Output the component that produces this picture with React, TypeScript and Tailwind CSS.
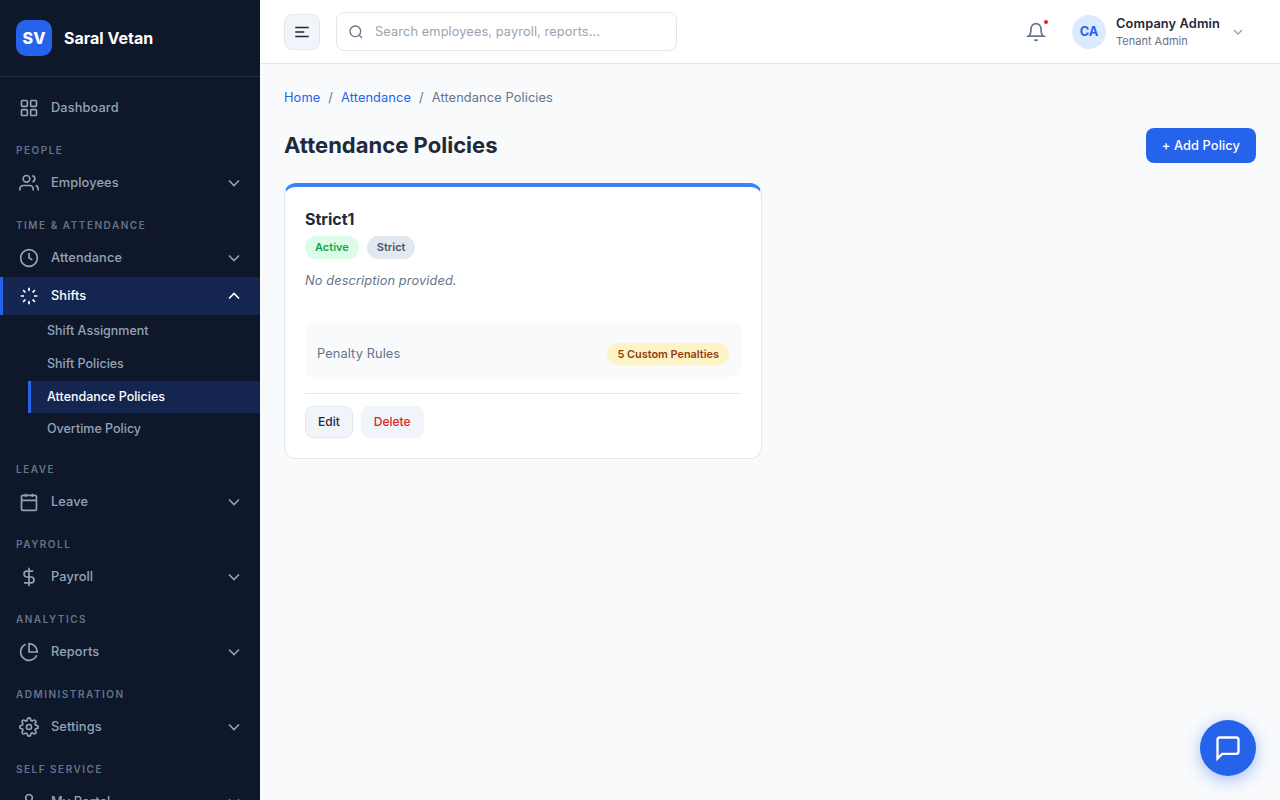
import type { ReactNode } from "react";

type IconProps = { size?: number; className?: string; children: ReactNode };

function Icon({ size = 20, className = "", children }: IconProps) {
  return (
    <svg
      width={size}
      height={size}
      viewBox="0 0 24 24"
      fill="none"
      stroke="currentColor"
      strokeWidth={2}
      className={`shrink-0 ${className}`}
    >
      {children}
    </svg>
  );
}

const icons: Record<string, ReactNode> = {
  grid: (
    <>
      <rect x="3" y="3" width="7" height="7" rx="1" />
      <rect x="14" y="3" width="7" height="7" rx="1" />
      <rect x="3" y="14" width="7" height="7" rx="1" />
      <rect x="14" y="14" width="7" height="7" rx="1" />
    </>
  ),
  users: (
    <>
      <path d="M17 21v-2a4 4 0 0 0-4-4H5a4 4 0 0 0-4 4v2" />
      <circle cx="9" cy="7" r="4" />
      <path d="M23 21v-2a4 4 0 0 0-3-3.87M16 3.13a4 4 0 0 1 0 7.75" />
    </>
  ),
  clock: (
    <>
      <circle cx="12" cy="12" r="10" />
      <path d="M12 6v6l4 2" />
    </>
  ),
  shifts: <path d="M12 2v4M12 18v4M4.93 4.93l2.83 2.83M16.24 16.24l2.83 2.83M2 12h4M18 12h4M4.93 19.07l2.83-2.83M16.24 7.76l2.83-2.83" />,
  calendar: (
    <>
      <rect x="3" y="4" width="18" height="18" rx="2" />
      <path d="M16 2v4M8 2v4M3 10h18" />
    </>
  ),
  dollar: <path d="M12 1v22M17 5H9.5a3.5 3.5 0 0 0 0 7h5a3.5 3.5 0 0 1 0 7H6" />,
  pie: <path d="M21.21 15.89A10 10 0 1 1 8 2.83M22 12A10 10 0 0 0 12 2v10z" />,
  settings: (
    <>
      <circle cx="12" cy="12" r="3" />
      <path d="M19.4 15a1.65 1.65 0 0 0 .33 1.82l.06.06a2 2 0 0 1 0 2.83 2 2 0 0 1-2.83 0l-.06-.06a1.65 1.65 0 0 0-1.82-.33 1.65 1.65 0 0 0-1 1.51V21a2 2 0 0 1-2 2 2 2 0 0 1-2-2v-.09A1.65 1.65 0 0 0 9 19.4a1.65 1.65 0 0 0-1.82.33l-.06.06a2 2 0 0 1-2.83 0 2 2 0 0 1 0-2.83l.06-.06a1.65 1.65 0 0 0 .33-1.82 1.65 1.65 0 0 0-1.51-1H3a2 2 0 0 1-2-2 2 2 0 0 1 2-2h.09A1.65 1.65 0 0 0 4.6 9a1.65 1.65 0 0 0-.33-1.82l-.06-.06a2 2 0 0 1 0-2.83 2 2 0 0 1 2.83 0l.06.06a1.65 1.65 0 0 0 1.82.33H9a1.65 1.65 0 0 0 1-1.51V3a2 2 0 0 1 2-2 2 2 0 0 1 2 2v.09a1.65 1.65 0 0 0 1 1.51 1.65 1.65 0 0 0 1.82-.33l.06-.06a2 2 0 0 1 2.83 0 2 2 0 0 1 0 2.83l-.06.06a1.65 1.65 0 0 0-.33 1.82V9a1.65 1.65 0 0 0 1.51 1H21a2 2 0 0 1 2 2 2 2 0 0 1-2 2h-.09a1.65 1.65 0 0 0-1.51 1z" />
    </>
  ),
  user: (
    <>
      <path d="M20 21v-2a4 4 0 0 0-4-4H8a4 4 0 0 0-4 4v2" />
      <circle cx="12" cy="7" r="4" />
    </>
  ),
};

type NavEntry = { label: string; icon: string; open?: boolean; children?: string[] };

const sections: { title: string; items: NavEntry[] }[] = [
  { title: "People", items: [{ label: "Employees", icon: "users" }] },
  {
    title: "Time & Attendance",
    items: [
      { label: "Attendance", icon: "clock" },
      {
        label: "Shifts",
        icon: "shifts",
        open: true,
        children: ["Shift Assignment", "Shift Policies", "Attendance Policies", "Overtime Policy"],
      },
    ],
  },
  { title: "Leave", items: [{ label: "Leave", icon: "calendar" }] },
  { title: "Payroll", items: [{ label: "Payroll", icon: "dollar" }] },
  { title: "Analytics", items: [{ label: "Reports", icon: "pie" }] },
  { title: "Administration", items: [{ label: "Settings", icon: "settings" }] },
  { title: "Self Service", items: [{ label: "My Portal", icon: "user" }] },
];

const currentPage = "Attendance Policies";

function NavItem({ item, expandable = true }: { item: NavEntry; expandable?: boolean }) {
  return (
    <a
      className={`flex h-[38px] items-center gap-3 border-l-[3px] pr-4 pl-4 text-[12.8px] leading-[19.5px] font-medium tracking-[0.1px] ${
        item.open ? "border-[#2563eb] bg-[#14264f] text-white" : "border-transparent text-[#94a3b8]"
      }`}
    >
      <Icon>{icons[item.icon]}</Icon>
      <span className="flex-1">{item.label}</span>
      {expandable && (
        <Icon>
          <path d={item.open ? "M18 15l-6-6-6 6" : "M6 9l6 6 6-6"} />
        </Icon>
      )}
    </a>
  );
}

function Sidebar() {
  return (
    <aside className="flex h-full w-[260px] shrink-0 flex-col overflow-hidden bg-[#0f172a]">
      <div className="flex shrink-0 items-center gap-3 border-b border-white/10 px-4 py-5">
        <div className="flex h-9 w-9 items-center justify-center rounded-[10px] bg-[#2563eb] text-base font-extrabold text-white">
          SV
        </div>
        <span className="text-base font-bold text-white">Saral Vetan</span>
      </div>
      <nav className="min-h-0 flex-1 overflow-hidden py-3">
        <NavItem item={{ label: "Dashboard", icon: "grid" }} expandable={false} />
        {sections.map((s) => (
          <div key={s.title}>
            <div className="px-4 pt-4 pb-1.5 text-[10px] leading-[15px] font-semibold tracking-[1.5px] text-[#64748b] uppercase">
              {s.title}
            </div>
            {s.items.map((item) => (
              <div key={item.label}>
                <NavItem item={item} />
                {item.children && (
                  <div className="ml-7">
                    {item.children.map((c) => (
                      <a
                        key={c}
                        className={`block border-l-[3px] py-[7px] pl-4 text-[12.5px] leading-[18.75px] font-medium ${
                          c === currentPage ? "border-[#2563eb] bg-[#14264f] text-white" : "border-transparent text-[#94a3b8]"
                        }`}
                      >
                        {c}
                      </a>
                    ))}
                  </div>
                )}
              </div>
            ))}
          </div>
        ))}
      </nav>
    </aside>
  );
}

function Topbar() {
  return (
    <header className="flex h-16 shrink-0 items-center border-b border-[#e2e8f0] bg-white px-6">
      <button className="flex h-9 w-9 items-center justify-center rounded-lg border border-[#e2e8f0] bg-[#f1f5f9] text-[#1e293b]">
        <Icon size={18}>
          <path d="M3 6h18M3 12h12M3 18h18" />
        </Icon>
      </button>
      <div className="ml-4 flex h-[39px] w-[341px] items-center gap-[11px] rounded-lg border border-[#e2e8f0] bg-white px-[11px]">
        <Icon size={16} className="text-[#64748b]">
          <circle cx="11" cy="11" r="8" />
          <path d="M21 21l-4.35-4.35" />
        </Icon>
        <span className="text-[12.8px] leading-[19.5px] tracking-[0.1px] text-[#9ca3af]">
          Search employees, payroll, reports...
        </span>
      </div>
      <div className="ml-auto flex items-center">
        <button className="relative mr-[26px] text-[#64748b]">
          <Icon>
            <path d="M18 8A6 6 0 0 0 6 8c0 7-3 9-3 9h18s-3-2-3-9M13.73 21a2 2 0 0 1-3.46 0" />
          </Icon>
          <span className="absolute -top-0.5 -right-0.5 h-1 w-1 rounded-full bg-[#dc2626]" />
        </button>
        <div className="flex h-[34px] w-[34px] items-center justify-center rounded-full bg-[#dbeafe] text-[12.8px] font-bold text-[#2563eb]">
          CA
        </div>
        <div className="ml-2.5">
          <div className="text-[12.8px] leading-[19.5px] font-semibold tracking-[0.12px] text-[#1e293b]">Company Admin</div>
          <div className="text-[11px] leading-[16.5px] text-[#64748b]">Tenant Admin</div>
        </div>
        <Icon size={16} className="mr-2.5 ml-2.5 text-[#94a3b8]">
          <path d="M6 9l6 6 6-6" />
        </Icon>
      </div>
    </header>
  );
}

function PolicyCard() {
  return (
    <article className="rounded-xl border border-t-4 border-[#e2e8f0] border-t-[#3b82f6] bg-white p-5">
      <h3 className="text-base leading-6 font-bold text-[#1e293b]">Strict1</h3>
      <div className="mt-[5px] flex gap-2 text-[11px] leading-[17px] font-semibold">
        <span className="rounded-full bg-[#dcfce7] px-2.5 py-[3px] text-[#16a34a]">Active</span>
        <span className="rounded-full bg-[#e2e8f0] px-2.5 py-[3px] text-[#475569]">Strict</span>
      </div>
      <p className="mt-3 h-[52px] text-[12.8px] leading-[19.5px] tracking-[0.1px] text-[#64748b] italic">
        No description provided.
      </p>
      <div className="flex items-end justify-between rounded-lg bg-[#f8fafc] px-3 pt-5 pb-3">
        <span className="text-[12.8px] leading-[22px] tracking-[0.1px] text-[#64748b]">Penalty Rules</span>
        <span className="rounded-full bg-[#fef3c7] px-2.5 text-[10.9px] leading-[22px] font-semibold text-[#92400e]">
          5 Custom Penalties
        </span>
      </div>
      <div className="mt-4 flex gap-2 border-t border-[#e2e8f0] pt-3 text-xs font-medium">
        <button className="h-8 rounded-lg border border-[#e2e8f0] bg-[#f1f5f9] px-3 text-[#1e293b]">Edit</button>
        <button className="h-8 rounded-lg border border-[#f1f5f9] bg-[#f1f5f9] px-3 text-[#dc2626]">Delete</button>
      </div>
    </article>
  );
}

export default function App() {
  return (
    <div className="flex h-screen overflow-hidden bg-[#f8fafc] font-['Inter',sans-serif] text-[#1e293b]">
      <Sidebar />
      <div className="flex min-w-0 flex-1 flex-col">
        <Topbar />
        <main className="flex-1 px-6 pt-6">
          <div className="flex gap-2 text-[12.8px] leading-[19.5px] tracking-[0.11px] text-[#64748b]">
            <a className="text-[#2563eb]">Home</a>
            <span>/</span>
            <a className="text-[#2563eb]">Attendance</a>
            <span>/</span>
            <span>{currentPage}</span>
          </div>
          <div className="mt-[20.5px] flex items-center justify-between">
            <h1 className="text-[22px] leading-[33px] font-bold tracking-[0.02px]">{currentPage}</h1>
            <button className="h-[35px] rounded-lg bg-[#2563eb] px-4 text-[12.8px] font-medium tracking-[0.1px] text-white">
              + Add Policy
            </button>
          </div>
          <div className="mt-5 grid grid-cols-2 gap-4">
            <PolicyCard />
          </div>
        </main>
      </div>
      <button className="fixed right-6 bottom-6 flex h-14 w-14 items-center justify-center rounded-full bg-[#2563eb] text-white shadow-[0_4px_16px_rgba(37,99,235,0.4)]">
        <Icon size={28}>
          <path d="M21 15a2 2 0 0 1-2 2H7l-4 4V5a2 2 0 0 1 2-2h14a2 2 0 0 1 2 2z" />
        </Icon>
      </button>
    </div>
  );
}
